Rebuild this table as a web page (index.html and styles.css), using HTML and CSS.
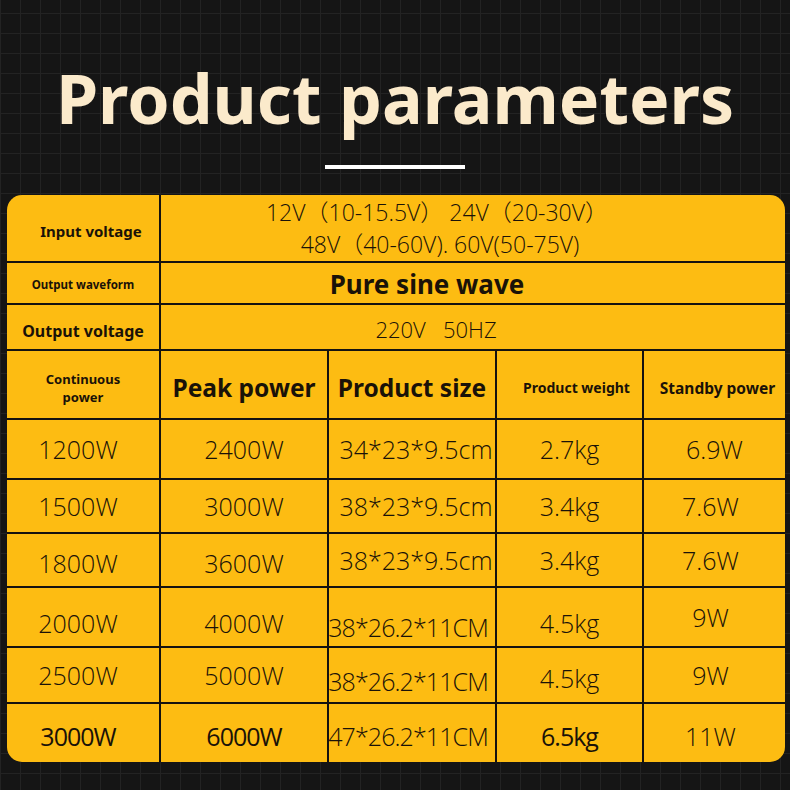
FILE: index.html
```html
<!DOCTYPE html>
<html lang="en">
<head>
<meta charset="utf-8">
<title>Product parameters</title>
<link rel="stylesheet" href="styles.css">
</head>
<body>
<div class="page">
  <h1 class="title">Product parameters</h1>
  <div class="bar"></div>
  <div class="table">
    <div class="cell label l-input">Input voltage</div>
    <div class="cell wide val-multi">
      <div>12V（10-15.5V） 24V（20-30V）</div>
      <div class="line2">48V（40-60V). 60V(50-75V)</div>
    </div>

    <div class="cell label l-wave">Output waveform</div>
    <div class="cell wide wave">Pure sine wave</div>

    <div class="cell label l-volt">Output voltage</div>
    <div class="cell wide val volt">220V&nbsp;&nbsp;&nbsp;50HZ</div>

    <div class="cell head h-cont"><span>Continuous</span><span>power</span></div>
    <div class="cell head h-big">Peak power</div>
    <div class="cell head h-big">Product size</div>
    <div class="cell head h-weight">Product weight</div>
    <div class="cell head h-stand">Standby power</div>

    <div class="cell val c1">1200W</div>
    <div class="cell val">2400W</div>
    <div class="cell val c3">34*23*9.5cm</div>
    <div class="cell val">2.7kg</div>
    <div class="cell val">6.9W</div>

    <div class="cell val c1">1500W</div>
    <div class="cell val">3000W</div>
    <div class="cell val c3">38*23*9.5cm</div>
    <div class="cell val">3.4kg</div>
    <div class="cell val c5">7.6W</div>

    <div class="cell val c1 dn">1800W</div>
    <div class="cell val dn">3600W</div>
    <div class="cell val c3">38*23*9.5cm</div>
    <div class="cell val">3.4kg</div>
    <div class="cell val c5">7.6W</div>

    <div class="cell val c1 dn2">2000W</div>
    <div class="cell val dn2">4000W</div>
    <div class="cell val tight dn3">38*26.2*11CM</div>
    <div class="cell val dn2">4.5kg</div>
    <div class="cell val c5">9W</div>

    <div class="cell val c1">2500W</div>
    <div class="cell val">5000W</div>
    <div class="cell val tight dn2">38*26.2*11CM</div>
    <div class="cell val dn">4.5kg</div>
    <div class="cell val c5">9W</div>

    <div class="cell val c1 last">3000W</div>
    <div class="cell val last">6000W</div>
    <div class="cell val tight dn">47*26.2*11CM</div>
    <div class="cell val last">6.5kg</div>
    <div class="cell val c5 dn">11W</div>
  </div>
</div>
</body>
</html>
```

FILE: styles.css
```css
* { box-sizing: border-box; }

html, body {
  margin: 0;
  padding: 0;
}

body {
  width: 790px;
  height: 790px;
  overflow: hidden;
  background-color: #151515;
  background-image:
    linear-gradient(to right, #232323 1px, transparent 1px),
    linear-gradient(to bottom, #232323 1px, transparent 1px);
  background-size: 20px 20px;
  background-position: 0 13px;
}

.page {
  width: 790px;
  height: 790px;
  display: flex;
  flex-direction: column;
  align-items: center;
}

.title {
  margin: 0;
  padding-top: 64px;
  font-family: "Noto Sans", "Open Sans", sans-serif;
  font-weight: 700;
  font-size: 68px;
  line-height: 68px;
  color: #fbeacb;
  white-space: nowrap;
}

.bar {
  width: 140px;
  height: 4px;
  background: #ffffff;
  margin-top: 33px;
}

.table {
  margin-top: 26px;
  align-self: flex-start;
  margin-left: 7px;
  width: 778px;
  height: 567px;
  display: grid;
  grid-template-columns: 152px 166px 166px 145px 141px;
  grid-template-rows: 66px 40px 44px 67px 58px 52px 52px 58px 54px 58px;
  gap: 2px;
  background: #141210;
  border-radius: 15px;
  overflow: hidden;
}

.cell {
  background: #fdbc12;
  color: #1a1208;
  display: flex;
  flex-direction: column;
  align-items: center;
  justify-content: center;
  text-align: center;
  white-space: nowrap;
}

.wide {
  grid-column: 2 / span 4;
}

.label, .head, .wave {
  font-family: "Noto Sans", "Open Sans", sans-serif;
  font-weight: 700;
}

.l-input { font-size: 15px; padding-left: 16px; padding-top: 6px; }
.l-wave { font-size: 11.5px; padding-top: 2px; }
.l-volt { font-size: 16px; padding-top: 8px; }

.val, .val-multi {
  font-family: "Open Sans", "Noto Sans CJK SC", sans-serif;
  font-weight: 300;
  font-size: 25px;
  line-height: 1;
}

.val-multi {
  font-size: 23px;
  line-height: 32px;
  padding-right: 72px;
}

.val-multi .line2 {
  padding-left: 6px;
}

.wave {
  font-size: 26px;
  padding-top: 2px;
  padding-right: 92px;
}

.volt {
  font-size: 22px;
  padding-top: 4px;
  padding-right: 74px;
}

.head { padding-top: 6px; }
.h-cont { font-size: 13px; line-height: 18px; }
.h-big { font-size: 24.5px; }
.h-weight { font-size: 14px; padding-left: 14px; }
.h-stand { font-size: 15.5px; padding-left: 6px; }

.c1 { padding-right: 10px; }
.c3 { padding-left: 8px; }
.c5 { padding-right: 8px; }
.tight { letter-spacing: -0.9px; padding-right: 8px; }
.dn { padding-top: 6px; }
.dn2 { padding-top: 12px; }
.dn3 { padding-top: 20px; }

.last {
  font-weight: 400;
  letter-spacing: -1px;
  padding-top: 6px;
}
```
